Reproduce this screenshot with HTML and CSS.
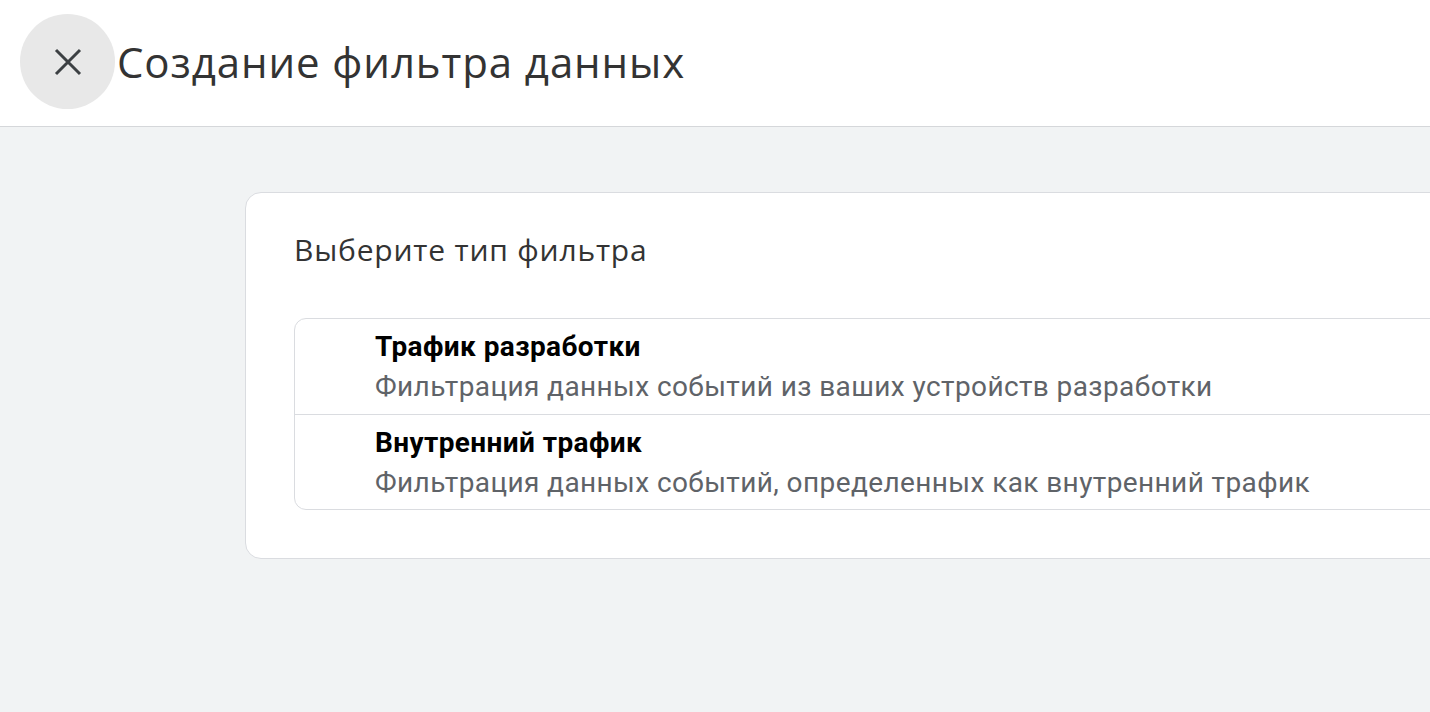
FILE: index.html
```html
<!DOCTYPE html>
<html lang="ru">

<head>
    <meta charset="UTF-8">
    <meta name="viewport" content="width=device-width, initial-scale=1.0">
    <title>Создание фильтра данных</title>
    <link rel="stylesheet" href="styles.css">
</head>

<body>
    <div id="header">
        <div class="close-btn">
            <svg width="28" height="28" viewBox="0 0 28 28">
                <path d="M2 2 L26 26 M26 2 L2 26" stroke="#3c4043" stroke-width="3" fill="none" />
            </svg>
        </div>
        <h1 class="page-title">Создание фильтра данных</h1>
    </div>

    <div id="main">
        <div class="card">
            <h2 class="card-title">Выберите тип фильтра</h2>
            <ul class="filter-list">
                <li>
                    <div class="item-title">Трафик разработки</div>
                    <div class="item-desc">Фильтрация данных событий из ваших устройств разработки</div>
                </li>
                <li>
                    <div class="item-title">Внутренний трафик</div>
                    <div class="item-desc">Фильтрация данных событий, определенных как внутренний трафик</div>
                </li>
            </ul>
        </div>
    </div>
</body>

</html>
```

FILE: styles.css
```css
* {
    margin: 0;
    padding: 0;
    box-sizing: border-box;
}

ul {
    list-style: none;
}

html,
body {
    height: 100%;
}

body {
    background: #f1f3f4;
    font-family: Roboto, "Liberation Sans", sans-serif;
    overflow: hidden;
}

#header {
    height: 127px;
    background: #fff;
    border-bottom: 1px solid #d5d7da;
    display: flex;
    align-items: center;
    padding-left: 20px;
    padding-bottom: 3px;
}

.close-btn {
    width: 95px;
    height: 95px;
    border-radius: 50%;
    background: #e8e8e8;
    display: flex;
    align-items: center;
    justify-content: center;
    flex-shrink: 0;
}

.page-title {
    margin-left: 2px;
    font-family: "Open Sans", sans-serif;
    font-weight: 400;
    font-size: 42px;
    color: #333;
    letter-spacing: 0.9px;
}

#main {
    padding: 65px 0 0 245px;
}

.card {
    width: 1300px;
    background: #fff;
    border: 1px solid #dadce0;
    border-radius: 16px;
    padding: 31px 48px 48px 48px;
}

.card-title {
    font-family: "Open Sans", sans-serif;
    font-weight: 400;
    font-size: 30px;
    line-height: 52px;
    color: #333;
    letter-spacing: 0.8px;
    margin-bottom: 42px;
}

.filter-list {
    border: 1px solid #dadce0;
    border-radius: 12px;
}

.filter-list li {
    height: 95px;
    padding: 8px 0 0 80px;
}

.filter-list li + li {
    border-top: 1px solid #dadce0;
}

.item-title {
    font-weight: 700;
    font-size: 28px;
    line-height: 40px;
    color: #000;
    letter-spacing: 0.4px;
}

.item-desc {
    font-size: 28px;
    line-height: 40px;
    color: #5f6368;
    letter-spacing: 0.4px;
}
```
